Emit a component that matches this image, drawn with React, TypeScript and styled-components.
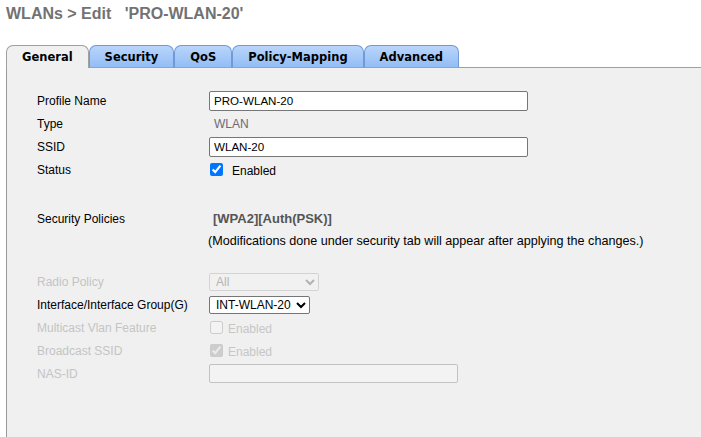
import React from "react";
import styled, { createGlobalStyle } from "styled-components";

const Global = createGlobalStyle`
  html, body { margin: 0; padding: 0; background: #ffffff; }
  body { font-family: "Liberation Sans", Arial, sans-serif; font-size: 12px; color: #000; }
`;

const Page = styled.div`
  display: flex;
  flex-direction: column;
  min-height: 437px;
`;

const Title = styled.h1`
  margin: 5px 0 0 6px;
  font-family: "Liberation Sans", Arial, sans-serif;
  font-size: 16px;
  font-weight: bold;
  color: #727272;
  line-height: 18px;
  white-space: pre;
`;

const TabBar = styled.div`
  display: flex;
  align-items: flex-end;
  margin: 22px 0 0 6px;
  height: 23px;
`;

const Tab = styled.div<{ $active?: boolean }>`
  box-sizing: border-box;
  height: 23px;
  display: flex;
  align-items: center;
  justify-content: center;
  padding: 0 15px;
  font-family: "DejaVu Sans", Verdana, sans-serif;
  font-size: 11.5px;
  font-weight: bold;
  color: #000;
  border-radius: 7px 7px 0 0;
  border: 1px solid ${(p) => (p.$active ? "#a0a0a0" : "#6f9ad6")};
  border-bottom: ${(p) => (p.$active ? "none" : "1px solid #8aa6cc")};
  background: ${(p) =>
    p.$active ? "#f0f0f0" : "linear-gradient(#b9d5fb, #93bdf5)"};
`;

const TabFiller = styled.div`
  flex: 1;
  height: 23px;
  border-bottom: 1px solid #a0a0a0;
  box-sizing: border-box;
`;

const Panel = styled.div`
  flex: 1;
  margin-left: 6px;
  border-left: 1px solid #9a9a9a;
  background: #f0f0f0;
  padding: 21px 0 0 30px;
  display: flex;
  flex-direction: column;
`;

const Row = styled.div<{ $h?: number }>`
  display: flex;
  align-items: center;
  height: ${(p) => p.$h ?? 23}px;
`;

const Spacer = styled.div<{ $h: number }>`
  height: ${(p) => p.$h}px;
`;

const Label = styled.div<{ $disabled?: boolean }>`
  width: 172px;
  flex: none;
  font-size: 12px;
  color: ${(p) => (p.$disabled ? "#c4c4c4" : "#000")};
`;

const Value = styled.div`
  display: flex;
  align-items: center;
`;

const TextInput = styled.input<{ $w: number }>`
  box-sizing: border-box;
  width: ${(p) => p.$w}px;
  height: 20px;
  padding: 0 4px;
  border: 1px solid #767676;
  border-radius: 2px;
  background: #fff;
  font-family: "Liberation Sans", Arial, sans-serif;
  font-size: 11.6px;
  color: #000;
  &:disabled {
    height: 19px;
    border-color: #c2c2c2;
    background: #f3f3f3;
  }
`;

const PlainText = styled.span`
  padding-left: 5px;
  color: #6b6b78;
  font-size: 12px;
`;

const Check = styled.input`
  margin: 0 0 0 1px;
  width: 13px;
  height: 13px;
`;

const CheckText = styled.span<{ $disabled?: boolean; $gap: number }>`
  margin-left: ${(p) => p.$gap}px;
  color: ${(p) => (p.$disabled ? "#c6c6c6" : "#000")};
  font-size: 12px;
  padding-top: 3px;
`;

const Policies = styled.span`
  padding-left: 4px;
  font-weight: bold;
  font-size: 13px;
  color: #555;
`;

const Note = styled.div`
  margin-left: 171px;
  font-size: 12.6px;
  color: #000;
`;

const Select = styled.select<{ $w: number }>`
  box-sizing: border-box;
  width: ${(p) => p.$w}px;
  height: 18px;
  padding: 0 2px;
  border: 1px solid #767676;
  border-radius: 2px;
  background: #fff;
  font-family: "Liberation Sans", Arial, sans-serif;
  font-size: 12px;
  color: #000;
  &:disabled {
    border-color: #c8c8c8;
    background: #f2f2f2;
    color: #9a9a9a;
  }
`;

const tabs = ["General", "Security", "QoS", "Policy-Mapping", "Advanced"];

export default function App() {
  return (
    <Page>
      <Global />
      <Title>{"WLANs > Edit   'PRO-WLAN-20'"}</Title>
      <TabBar>
        {tabs.map((t, i) => (
          <Tab key={t} $active={i === 0}>
            {t}
          </Tab>
        ))}
        <TabFiller />
      </TabBar>
      <Panel>
        <Row>
          <Label>Profile Name</Label>
          <Value>
            <TextInput $w={319} defaultValue="PRO-WLAN-20" />
          </Value>
        </Row>
        <Row>
          <Label>Type</Label>
          <PlainText>WLAN</PlainText>
        </Row>
        <Row>
          <Label>SSID</Label>
          <Value>
            <TextInput $w={319} defaultValue="WLAN-20" />
          </Value>
        </Row>
        <Row>
          <Label>Status</Label>
          <Value>
            <Check type="checkbox" defaultChecked />
            <CheckText $gap={9}>Enabled</CheckText>
          </Value>
        </Row>
        <Spacer $h={26} />
        <Row>
          <Label>Security Policies</Label>
          <Policies>[WPA2][Auth(PSK)]</Policies>
        </Row>
        <Row $h={22}>
          <Note>(Modifications done under security tab will appear after applying the changes.)</Note>
        </Row>
        <Spacer $h={18} />
        <Row>
          <Label $disabled>Radio Policy</Label>
          <Select $w={110} disabled defaultValue="All">
            <option>All</option>
          </Select>
        </Row>
        <Row>
          <Label>Interface/Interface Group(G)</Label>
          <Select $w={101} defaultValue="INT-WLAN-20">
            <option>INT-WLAN-20</option>
          </Select>
        </Row>
        <Row>
          <Label $disabled>Multicast Vlan Feature</Label>
          <Value>
            <Check type="checkbox" disabled />
            <CheckText $disabled $gap={5}>Enabled</CheckText>
          </Value>
        </Row>
        <Row>
          <Label $disabled>Broadcast SSID</Label>
          <Value>
            <Check type="checkbox" disabled defaultChecked />
            <CheckText $disabled $gap={5}>Enabled</CheckText>
          </Value>
        </Row>
        <Row>
          <Label $disabled>NAS-ID</Label>
          <Value>
            <TextInput $w={249} disabled />
          </Value>
        </Row>
      </Panel>
    </Page>
  );
}
